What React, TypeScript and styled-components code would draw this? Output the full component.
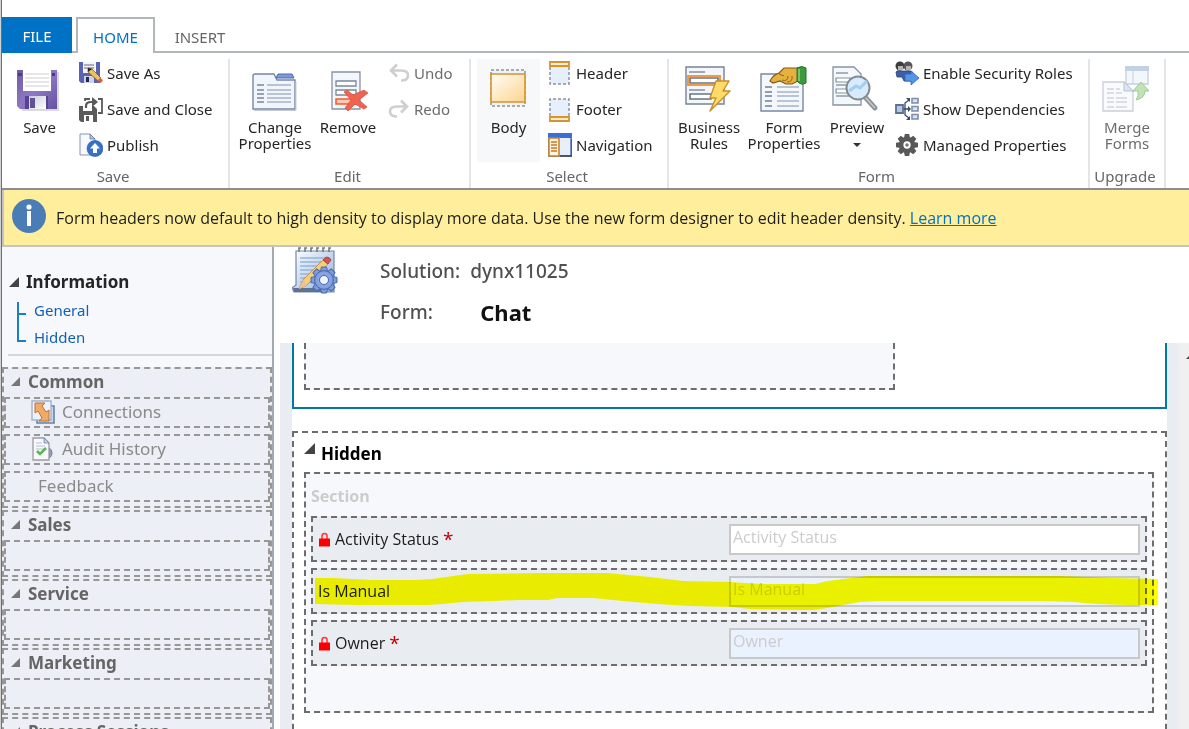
import React from "react";
import styled, { createGlobalStyle, css } from "styled-components";

const GlobalStyle = createGlobalStyle`
  * { box-sizing: border-box; }
  html, body, #root { height: 100%; }
  body {
    margin: 0;
    background: #fff;
    color: #262626;
    font-family: "Noto Sans", "Open Sans", sans-serif;
    font-size: 15px;
    line-height: 20px;
    overflow: hidden;
  }
  button, input { font: inherit; color: inherit; }
  button { background: none; border: 0; padding: 0; cursor: pointer; }
  a { color: #1160b7; text-decoration: none; }
  h1, h2, h3, p, ul { margin: 0; padding: 0; font: inherit; }
  ul { list-style: none; }
  svg { display: block; flex: none; }
`;

/* ---------- page frame ---------- */

const Page = styled.div`
  height: 100vh;
  display: flex;
  flex-direction: column;
  border-left: 1px solid #d2d2d2;
  overflow: hidden;
`;

const Frame = styled.div`
  flex: 1;
  min-height: 0;
  display: flex;
  flex-direction: column;
  border-left: 1px solid #6e6e6e;
`;

/* ---------- ribbon tabs ---------- */

const TabBar = styled.nav`
  display: flex;
  align-items: flex-end;
  height: 53px;
  flex: none;
  padding-top: 17px;
`;

const FileTab = styled.button`
  align-self: stretch;
  width: 70px;
  padding-top: 2px;
  background: #0072c6;
  color: #fff;
`;

const TabGap = styled.span<{ $fill?: boolean }>`
  width: 4px;
  border-bottom: 2px solid #b1b6ba;
  ${(p) => p.$fill && css`flex: 1;`}
`;

const Tab = styled.button<{ $active?: boolean }>`
  align-self: stretch;
  width: 79px;
  border: 2px solid ${(p) => (p.$active ? "#b1b6ba" : "transparent")};
  border-bottom-color: ${(p) => (p.$active ? "#fff" : "#b1b6ba")};
  border-bottom-width: ${(p) => (p.$active ? "0" : "2px")};
  padding-top: 2px;
  color: ${(p) => (p.$active ? "#0072c6" : "#666")};
  ${(p) => !p.$active && css`
    border-width: 0 0 2px;
    width: 90px;
    padding-top: 5px;
  `}
`;

/* ---------- ribbon ---------- */

const Ribbon = styled.div`
  display: flex;
  flex: none;
  height: 137px;
  padding-top: 6px;
  border-bottom: 2px solid #8a8d91;
`;

const Group = styled.section<{ $w: number }>`
  display: flex;
  flex-direction: column;
  width: ${(p) => p.$w}px;
  border-right: 2px solid #e4e5e6;
`;

const GroupBody = styled.div<{ $pad?: number; $gap?: number }>`
  display: flex;
  align-items: stretch;
  height: 103px;
  padding-left: ${(p) => p.$pad ?? 0}px;
  gap: ${(p) => p.$gap ?? 0}px;
`;

const GroupLabel = styled.h2`
  color: #666;
  text-align: center;
  padding-top: 4px;
  padding-right: 4px;
  white-space: nowrap;
`;

const BigButton = styled.button<{ $w: number; $on?: boolean; $off?: boolean }>`
  display: flex;
  flex-direction: column;
  align-items: center;
  flex: none;
  width: ${(p) => p.$w}px;
  padding-top: 7px;
  gap: 5px;
  line-height: 16px;
  background: ${(p) => (p.$on ? "#f7f8fa" : "transparent")};
  color: ${(p) => (p.$off ? "#6c6c6c" : "#262626")};
`;

const IconSlot = styled.span`
  display: flex;
  align-items: center;
  height: 48px;
  padding: 0 2px 2px 0;
`;

const Caption = styled.span`
  display: flex;
  flex-direction: column;
  align-items: center;
  white-space: nowrap;
`;

const SmallList = styled.div<{ $inset?: number }>`
  display: flex;
  flex-direction: column;
  gap: 12px;
  padding-top: 2px;
  margin-left: ${(p) => p.$inset ?? 0}px;
`;

const SmallButton = styled.button<{ $off?: boolean }>`
  display: flex;
  align-items: center;
  gap: 4px;
  height: 24px;
  white-space: nowrap;
  color: ${(p) => (p.$off ? "#6c6c6c" : "#262626")};
`;

/* ---------- notice ---------- */

const Notice = styled.div`
  display: flex;
  align-items: center;
  flex: none;
  gap: 10px;
  height: 57px;
  padding-left: 8px;
  color: #1d1d1d;
  background: #ffef9d;
  border-left: 2px solid #c4c4c4;
  border-bottom: 2px solid #c4c4c4;
  font-family: "Open Sans", "Noto Sans", sans-serif;
  font-size: 16px;
  white-space: nowrap;
  svg { margin-bottom: 4px; }
  p { padding-top: 1px; }
  a { color: #0072c6; text-decoration: underline; }
`;

/* ---------- sidebar ---------- */

const Work = styled.div`
  display: flex;
  flex: 1;
  min-height: 0;
`;

const Sidebar = styled.aside`
  flex: none;
  width: 272px;
  background: #f6f8fb;
  border-right: 2px solid #a3a9b3;
  overflow: hidden;
`;

const Outline = styled.div`
  margin-left: 6px;
  height: 109px;
  padding-top: 24px;
  border-bottom: 2px solid #d4d7da;
`;

const OutlineTitle = styled.h3`
  display: flex;
  align-items: center;
  gap: 7px;
  padding-left: 1px;
  font-size: 17px;
  line-height: 22px;
  font-weight: 700;
`;

const Tree = styled.ul`
  padding: 9px 0 0 9px;
`;

const Branch = styled.li`
  display: flex;
  height: 27px;
  gap: 8px;
  a { line-height: 16px; }
`;

const Modules = styled.div`
  display: flex;
  flex-direction: column;
  gap: 2px;
  margin-top: 11px;
  background: #eceff5;
`;

const Module = styled.section`
  border: 2px dashed #979797;
  padding-bottom: 4px;
  color: #8a8a8a;
`;

const ModuleTitle = styled.h3`
  display: flex;
  align-items: center;
  gap: 8px;
  height: 28px;
  padding: 0 0 3px 7px;
  color: #656565;
  font-size: 17px;
  font-weight: 700;
`;

const ModuleItems = styled.ul`
  display: flex;
  flex-direction: column;
  gap: 6px;
`;

const ModuleItem = styled.li<{ $indent?: number }>`
  display: flex;
  align-items: center;
  gap: 7px;
  height: 31px;
  border: 2px dashed #979797;
  padding: 0 0 2px ${(p) => p.$indent ?? 25}px;
  font-size: 17px;
`;

/* ---------- form designer ---------- */

const Designer = styled.main`
  flex: 1;
  min-width: 0;
  display: flex;
  flex-direction: column;
`;

const FormHeader = styled.header`
  display: flex;
  flex: none;
  gap: 40px;
  height: 96px;
  padding-left: 18px;
`;

const HeaderLines = styled.dl`
  margin: 0;
  padding-top: 10px;
  display: grid;
  grid-template-columns: auto auto;
  grid-template-rows: 28px 53px;
  align-items: center;
  align-content: start;
  justify-content: start;
  column-gap: 10px;
  color: #505050;
  font-size: 19px;
  font-weight: 500;
  white-space: nowrap;
  dt, dd { margin: 0; }
`;

const FormName = styled.dd`
  padding-left: 10px;
  color: #111;
  font-size: 22px;
  font-weight: 700;
`;

const CanvasArea = styled.div`
  display: flex;
  flex: 1;
  min-height: 0;
  margin-left: 6px;
  overflow: hidden;
  background: #e9ecf1;
`;

const Sheet = styled.div`
  flex: 1;
  margin: 0 12px;
  background: #fff;
`;

const ScrollTrack = styled.div`
  width: 10px;
  display: flex;
  justify-content: flex-end;
  padding-top: 13px;
  background: #f0f0f0;
`;

const SelectedTab = styled.section`
  display: grid;
  grid-template-columns: 16fr 7fr;
  height: 66px;
  padding: 0 11px 17px 10px;
  border: 2px solid #0278a3;
  border-top: 0;
`;

const EmptySection = styled.div`
  border: 2px dashed #6d6d6d;
  border-top: 0;
  background: #f6f8fb;
`;

const FormTab = styled.section`
  margin-top: 22px;
  height: 420px;
  padding: 0 11px 0 10px;
  border: 2px dashed #6d6d6d;
`;

const TabTitle = styled.h2`
  display: flex;
  gap: 6px;
  height: 39px;
  padding-top: 10px;
  color: #000;
  font-size: 17px;
  line-height: 22px;
  font-weight: 700;
`;

const Section = styled.div`
  height: 241px;
  padding: 12px 5px 0;
  border: 2px dashed #6d6d6d;
  background: #f6f8fb;
  font-family: "Open Sans", "Noto Sans", sans-serif;
  font-size: 16px;
`;

const SectionTitle = styled.h3`
  height: 30px;
  color: #ccc;
  font-weight: 700;
`;

const Fields = styled.div`
  display: flex;
  flex-direction: column;
  gap: 6px;
`;

const FieldRow = styled.div`
  position: relative;
  display: grid;
  grid-template-columns: 1fr 1fr;
  align-items: center;
  height: 46px;
  padding: 0 5px;
  border: 2px dashed #6d6d6d;
  background: #e9ecf1;
`;

const FieldLabel = styled.label`
  display: flex;
  align-items: center;
  gap: 4px;
  color: #1c1c1c;
`;

const Star = styled.span`
  color: #c00000;
  font-size: 19px;
`;

const FieldInput = styled.input<{ $tint?: boolean }>`
  width: 100%;
  height: 31px;
  padding: 0 2px 5px;
  border: 2px solid #c8c8c8;
  border-radius: 0;
  background: ${(p) => (p.$tint ? "#eaf1ff" : "#fff")};
  &::placeholder { color: #ccc; opacity: 1; }
`;

const Marker = styled.svg`
  position: absolute;
  left: 2px;
  top: 3px;
  width: calc(100% + 11px);
  height: 38px;
  mix-blend-mode: multiply;
  pointer-events: none;
`;

/* ---------- icons ---------- */

const Triangle = ({ fill = "#444", size = 11 }) => (
  <svg width={size} height={size} viewBox="0 0 11 11" aria-hidden>
    <path d="M11 0V11H0Z" fill={fill} />
  </svg>
);

const SaveIcon = () => (
  <svg width="43" height="43" viewBox="0 0 43 43" aria-hidden>
    <defs>
      <linearGradient id="disk" x1="0" y1="0" x2="1" y2="1">
        <stop offset="0" stopColor="#6f5aa6" />
        <stop offset="0.5" stopColor="#8e78c4" />
        <stop offset="1" stopColor="#6551a0" />
      </linearGradient>
      <linearGradient id="steel" x1="0" y1="0" x2="1" y2="1">
        <stop offset="0" stopColor="#c9c9d6" />
        <stop offset="1" stopColor="#fff" />
      </linearGradient>
    </defs>
    <path d="M3 4H42V43H6L3 40Z" fill="#d9d9de" />
    <path d="M0 2H40V41H3L0 38Z" fill="url(#disk)" />
    <path d="M6 2H34V23H6Z" fill="#fff" />
    <path d="M8 6H32M8 10H32M8 14H32M8 18H32" stroke="#cdcdd2" strokeWidth="1.200" />
    <path d="M1 5H5V8H1ZM35 5H38V8H35Z" fill="#4b3b86" />
    <path d="M8 28H31V41H8Z" fill="#56458e" />
    <path d="M12 28H29V41H12Z" fill="url(#steel)" />
    <path d="M13 30H18V40H13Z" fill="#62529c" />
  </svg>
);

const SaveAsIcon = () => (
  <svg width="24" height="24" viewBox="0 0 24 24" aria-hidden>
    <path d="M0 1H21V22H2L0 20Z" fill="#5a62b4" />
    <path d="M4 1H17V12H4Z" fill="#f4f4fb" />
    <path d="M5 4H15M5 7H15" stroke="#9295b0" strokeWidth="1.5" />
    <path d="M5 15H15V22H5Z" fill="#cfd2e4" />
    <path d="M7 16H10V21H7Z" fill="#222a55" />
    <path d="M9 7L13 8L22 17L19 20L9 11Z" fill="#edc25a" stroke="#7d5d1d" strokeWidth="0.8" />
    <path d="M18 20L21 17L24 19L22 22Z" fill="#d5604a" />
    <path d="M9 7L13 8L9 11Z" fill="#222" />
  </svg>
);

const SaveCloseIcon = () => (
  <svg width="24" height="25" viewBox="0 0 24 25" aria-hidden>
    <path d="M0 9H4V14H13V9H15L18 12V25H2L0 23Z" fill="#5a5a5a" />
    <path d="M5 18H14V25H5Z" fill="#fff" />
    <path d="M7 19H10V24H7Z" fill="#5a5a5a" />
    <path d="M7 11V9Q7 5 12 5H15" fill="none" stroke="#5a5a5a" strokeWidth="2.2" />
    <path d="M13 0L19 5L13 10V7Z" fill="#5a5a5a" />
    <path d="M6 4V2H11M19 2H23V16H19" fill="none" stroke="#5a5a5a" strokeWidth="1.8" />
  </svg>
);

const PublishIcon = () => (
  <svg width="24" height="24" viewBox="0 0 24 24" aria-hidden>
    <path d="M1 1H11L16 6V22H1Z" fill="#f7f9fc" stroke="#8496b0" />
    <path d="M11 1V6H16Z" fill="#b8c6dc" stroke="#60799c" strokeWidth="0.8" />
    <circle cx="16" cy="15.500" r="8" fill="#3572c6" stroke="#2353a0" strokeWidth="0.6" />
    <path d="M16 10L21 15.500H18V20H14V15.500H11Z" fill="#fff" />
  </svg>
);

const PropertiesIcon = () => (
  <svg width="45" height="43" viewBox="0 0 45 43" aria-hidden>
    <path d="M1 8Q1 6 3 6H22L25 12H43V41H1Z" fill="#f1f6fc" stroke="#7787a3" strokeWidth="1.4" />
    <path d="M24 10L26 6H40L42 10Z" fill="#7d9ad6" stroke="#4c6bb0" />
    <path d="M5 17H12M5 22H12M5 26H12M5 30H12M5 34H12" stroke="#7d8797" strokeWidth="1.5" />
    <path d="M15 17H39M15 22H39M15 26H39M15 30H39M15 34H39" stroke="#a6b2c4" strokeWidth="1.5" />
    <path d="M2 42.500H44V14" fill="none" stroke="#c4c9d1" />
  </svg>
);

const RemoveIcon = () => (
  <svg width="42" height="43" viewBox="0 0 42 43" aria-hidden>
    <path d="M6 4H34V41H6Z" fill="#f3f7fb" stroke="#8793a5" strokeWidth="1.3" />
    <path d="M10 13H30V18H10ZM10 22H30V27H10Z" fill="#fff" stroke="#7c8796" strokeWidth="1.3" />
    <path d="M10 31H30V36H10Z" fill="#ffc7ae" stroke="#ee5e33" strokeWidth="1.6" />
    <path d="M21 22L27 27L38 22L42 25L33 32L41 39L38 41L29 36L22 43L19 40L25 32L18 24Z" fill="#ee6450" stroke="#dd4b36" strokeWidth="0.7" />
  </svg>
);

const UndoIcon = ({ flip = false }) => (
  <svg width="22" height="20" viewBox="0 0 22 20" aria-hidden>
    <g transform={flip ? "matrix(-1 0 0 1 22 0)" : undefined}>
      <path d="M3 7.500H13Q20 7.500 20 12.500T13 17.500" fill="none" stroke="#cfcfcf" strokeWidth="2.600" />
      <path d="M9 1.500L3 7.500L9 13.500" fill="none" stroke="#cfcfcf" strokeWidth="2.600" />
    </g>
  </svg>
);

const BodyIcon = () => (
  <svg width="38" height="43" viewBox="0 0 38 43" aria-hidden>
    <defs>
      <linearGradient id="amber" x1="0" y1="0" x2="1" y2="1">
        <stop offset="0" stopColor="#fffdf7" />
        <stop offset="1" stopColor="#fcd48e" />
      </linearGradient>
    </defs>
    <path d="M2 2H36V38H2Z" fill="#eef3fa" stroke="#8d939c" strokeWidth="1.500" strokeDasharray="3 2" />
    <path d="M2 6H36V34H2Z" fill="url(#amber)" stroke="#d9922c" strokeWidth="1.600" />
  </svg>
);

const BandIcon = ({ footer = false }) => (
  <svg width="24" height="25" viewBox="0 0 24 25" aria-hidden>
    <g transform={footer ? "matrix(1 0 0 -1 0 25)" : undefined}>
      <path d="M2 6V23H21V6" fill="#e6effb" stroke="#8d939c" strokeWidth="1.500" strokeDasharray="3 2" />
      <path d="M2 1H21V5H2Z" fill="#fff0cf" stroke="#d9922c" strokeWidth="1.800" />
    </g>
  </svg>
);

const NavigationIcon = () => (
  <svg width="24" height="24" viewBox="0 0 24 24" aria-hidden>
    <path d="M1 1H23V23H1Z" fill="#e7effa" stroke="#4a68a8" strokeWidth="1.400" />
    <path d="M0 0H24V5H0Z" fill="#3a6fd8" />
    <path d="M1 5H11V23H1Z" fill="#fff4dc" stroke="#c98026" strokeWidth="1.500" />
    <path d="M3 9H9M3 12H9M3 15H9M3 18H9" stroke="#c77a27" strokeWidth="1.400" />
    <path d="M12 23H24V6" fill="none" stroke="#3c4657" strokeWidth="1.400" />
  </svg>
);

const RulesIcon = () => (
  <svg width="46" height="46" viewBox="0 0 46 46" aria-hidden>
    <path d="M1 1H39V38H1Z" fill="#f3f7fb" stroke="#758296" strokeWidth="1.400" />
    <path d="M4 6H20M4 24H20" stroke="#8590a1" strokeWidth="1.600" />
    <path d="M3 10H35V19H3Z" fill="#fff" stroke="#ef9a45" strokeWidth="2" />
    <path d="M5 12H33V17H5ZM5 28H26V33H5Z" fill="#fff" stroke="#66748a" strokeWidth="1.600" />
    <path d="M31 15H44L38 25H45L25 45L31 32H25Z" fill="#ffdc69" stroke="#c98f26" strokeWidth="1.400" strokeLinejoin="round" />
  </svg>
);

const FormPropsIcon = () => (
  <svg width="47" height="46" viewBox="0 0 47 46" aria-hidden>
    <path d="M1 8H43V45H1Z" fill="#f4f8fc" stroke="#7787a3" strokeWidth="1.400" />
    <path d="M5 21H12M5 26H12M5 30H12M5 35H12M5 40H12" stroke="#6f7f9b" strokeWidth="1.600" />
    <path d="M17 21H39M17 26H39M17 30H39M17 35H39M17 40H39" stroke="#a6b2c4" strokeWidth="1.600" />
    <path d="M10 15Q13 9 19 7L24 2H38V15L32 18H26L20 15L13 17Z" fill="#e8b13e" stroke="#7d5a17" strokeWidth="1.200" />
    <path d="M19 8L24 10M22 14Q28 16 28 10M27 16Q33 16 32 10" fill="none" stroke="#8a651d" />
    <path d="M37 2Q42 -1 46 2V17Q41 20 37 15Z" fill="#3d9a3c" stroke="#22702a" />
    <path d="M39 3V15" stroke="#8fd27e" strokeWidth="1.500" />
  </svg>
);

const PreviewIcon = () => (
  <svg width="48" height="46" viewBox="0 0 48 46" aria-hidden>
    <path d="M1 1H22L29 8V39H1Z" fill="#f5f8fb" stroke="#8592a5" strokeWidth="1.300" />
    <path d="M4 7H16M4 19H16M4 30H18" stroke="#8f9aab" strokeWidth="1.500" />
    <path d="M4 12H18V16H4ZM4 23H18V27H4Z" fill="#fff" stroke="#8491a4" strokeWidth="1.200" />
    <path d="M33 31L43 42" stroke="#8d939b" strokeWidth="5" strokeLinecap="round" />
    <path d="M33 31L43 42" stroke="#c6cacf" strokeWidth="1.500" />
    <circle cx="26" cy="22" r="11.500" fill="#d6ebfb" stroke="#848b94" strokeWidth="2" />
    <path d="M17 25L24 20L28 22L35 15" fill="none" stroke="#a4cdf2" strokeWidth="3" />
  </svg>
);

const RolesIcon = () => (
  <svg width="24" height="24" viewBox="0 0 24 24" aria-hidden>
    <circle cx="5" cy="5" r="4.500" fill="#3c3c3e" />
    <circle cx="13" cy="5" r="4.500" fill="#555659" />
    <path d="M3 5H8V9H3ZM11 5H16V9H11Z" fill="#b9b4ae" />
    <path d="M1 11Q2 9 6 10L11 10L16 10Q19 11 19 16V20H9L7 16H2Z" fill="#3d5fa6" stroke="#263f78" strokeWidth="0.800" />
    <path d="M10 13H16V10L24 17L16 24V20H10Z" fill="#5594e8" stroke="#2b64bd" strokeWidth="0.800" />
  </svg>
);

const DependenciesIcon = () => (
  <svg width="24" height="24" viewBox="0 0 24 24" aria-hidden>
    <path d="M7 12H15M10 12V6L14 3M10 12V18L14 21" fill="none" stroke="#35496a" strokeWidth="1.300" />
    <path d="M13 9L16 12L13 15ZM11 1H15V5ZM11 23H15V19Z" fill="#35496a" />
    <path d="M1 8H8V16H1Z" fill="#b7c7e0" stroke="#5d7192" strokeWidth="1.800" />
    <path d="M17 1.500H23V6H17ZM17 9.500H23V14H17ZM17 17.500H23V22H17Z" fill="#dbe4f1" stroke="#7d8dab" strokeWidth="1.600" />
  </svg>
);

const Gear = ({ r = 11, fill = "#585858", stroke = "none", hole = "#fff" }) => (
  <g fill={fill} stroke={stroke}>
    {[0, 45, 90, 135, 180, 225, 270, 315].map((a) => (
      <path key={a} transform={`rotate(${a})`} d={`M${-r * 0.2} ${-r}H${r * 0.2}L${r * 0.28} ${-r * 0.6}H${-r * 0.28}Z`} />
    ))}
    <circle r={r * 0.72} />
    <circle r={r * 0.33} fill={hole} />
  </g>
);

const GearIcon = () => (
  <svg width="24" height="24" viewBox="-12 -12 24 24" aria-hidden>
    <Gear />
    <circle r="1.800" fill="#777" />
  </svg>
);

const MergeIcon = () => (
  <svg width="48" height="46" viewBox="0 0 48 46" aria-hidden>
    <path d="M24 1H46V18H24Z" fill="#f3f7fc" stroke="#c5cfdf" strokeWidth="1.300" />
    <path d="M23 0H47V5H23Z" fill="#c2d0e8" />
    <path d="M31 5V18" stroke="#c5cfdf" />
    <path d="M1 16H22L31 25V45H1Z" fill="#f8fafc" stroke="#c9cfd8" strokeWidth="1.300" />
    <path d="M22 16V25H31Z" fill="#dde4ee" stroke="#b9c3d3" />
    <path d="M5 23H12M5 27H12M5 32H12M5 36H12M5 41H12M14 23H18M14 27H20M14 32H25M14 36H25M14 41H25" stroke="#d0d5de" strokeWidth="1.400" />
    <path d="M39 16L47 25H43Q43 32 34 34Q37 30 36 25H31Z" fill="#bfe3b4" stroke="#9dcc92" />
  </svg>
);

const InfoIcon = () => (
  <svg width="34" height="34" viewBox="0 0 34 34" aria-hidden>
    <circle cx="17" cy="17" r="17" fill="#4a7db5" />
    <circle cx="17" cy="8" r="2.600" fill="#fff" />
    <path d="M15 12H19V27H15Z" fill="#fff" />
  </svg>
);

const FormIcon = () => (
  <svg width="48" height="48" viewBox="0 0 48 48" aria-hidden>
    <defs>
      <linearGradient id="pad" x1="0" y1="0" x2="1" y2="1">
        <stop offset="0" stopColor="#fff" />
        <stop offset="1" stopColor="#8fb0da" />
      </linearGradient>
    </defs>
    <path d="M4 4H42V45H2L0 41L4 38Z" fill="url(#pad)" stroke="#7189ab" strokeWidth="1.200" />
    <path d="M1 41H32V45H2Z" fill="#5b7396" />
    <path d="M8 11H37M8 15H37M8 19H34M8 23H30M8 27H27M8 31H24M8 35H22" stroke="#94b4dd" strokeWidth="1.500" />
    <path d="M7 5V1H9M13 5V1H15M19 5V1H21M25 5V1H27M31 5V1H33M37 5V1H39" fill="none" stroke="#777" strokeWidth="1.600" />
    <path d="M7 42L11 33L31 13L36 17L15 38Z" fill="#f6cf74" stroke="#b98a3c" strokeWidth="0.800" />
    <path d="M7 42L11 33L15 38Z" fill="#e9c29a" />
    <path d="M31 13L34 10Q38 10 39 13L36 17Z" fill="#d65454" stroke="#9c3a3a" strokeWidth="0.800" />
    <g transform="translate(32 33)">
      <Gear r={13} fill="#7d9cdb" stroke="#4a68ae" hole="#e8effb" />
      <circle r="8" fill="#86a4e0" />
      <circle r="4.500" fill="#eef3fc" stroke="#4a68ae" />
    </g>
  </svg>
);

const ConnectionsIcon = () => (
  <svg width="24" height="24" viewBox="0 0 24 24" aria-hidden>
    <path d="M6 6H23V23H6Z" fill="#cdd9ec" stroke="#6a82a8" strokeWidth="1.600" />
    <path d="M1 1H20V20H1Z" fill="#eef3fa" stroke="#a3b3cc" strokeWidth="1.400" />
    <path d="M4 3H14L11 6L15 12L18 10V21H8L11 18L7 11L4 13Z" fill="#f2ab66" stroke="#b8733c" strokeLinejoin="round" />
  </svg>
);

const AuditIcon = () => (
  <svg width="24" height="24" viewBox="0 0 24 24" aria-hidden>
    <circle cx="15" cy="16" r="6" fill="#8ca0bf" stroke="#6c7c96" />
    <path d="M2 1H13L18 6V23H2Z" fill="#f7f9fc" stroke="#a09aa0" strokeWidth="1.300" />
    <path d="M13 1V6H18Z" fill="#c8d3e4" stroke="#6f84a5" strokeWidth="0.800" />
    <path d="M5 6H11M5 9H14M5 12H14" stroke="#b5c2d6" />
    <path d="M6 14L9 17L15 11" fill="none" stroke="#5cb556" strokeWidth="2.600" />
  </svg>
);

const LockIcon = () => (
  <svg width="13" height="15" viewBox="0 0 13 15" aria-hidden>
    <path d="M4 7V4Q4 1.500 6.500 1.500T9 4V7" fill="none" stroke="#f33" strokeWidth="1.500" />
    <path d="M1 6.500H12V14.500H1Z" fill="#fa0000" />
  </svg>
);

const TreeArm = ({ last = false }) => (
  <svg width="9" height="27" viewBox="0 0 9 27" aria-hidden>
    <path d={last ? "M1 0V12H9" : "M1 0V27M1 12H9"} fill="none" stroke="#1a7fc2" strokeWidth="2" />
  </svg>
);

/* ---------- page ---------- */

const modules = ["Sales", "Service", "Marketing", "Process Sessions"];

type FieldProps = { id: string; name: string; locked?: boolean; tint?: boolean; marked?: boolean };

const Field = ({ id, name, locked, tint, marked }: FieldProps) => (
  <FieldRow>
    <FieldLabel htmlFor={id}>
      {locked && <LockIcon />}
      {name}
      {locked && <Star>*</Star>}
    </FieldLabel>
    <FieldInput id={id} placeholder={name} $tint={tint} />
    {marked && (
      <Marker viewBox="0 0 843 38" preserveAspectRatio="none" aria-hidden>
        <path
          fill="#ff0"
          d="M0 5H18L57 7H100L117 6L138 3L153 1L228 0H292L335 4L368 8L415 9L430 10L448 11H500L513 8L528 6L552 3H743L773 4L795 5L843 6V32H812L782 31L758 29L725 28H567L545 29L528 32L512 35L498 37H485L435 36L418 34L375 33L342 31L308 28L278 25H242L233 27H205L178 28L148 29L127 31L113 32H40L0 31Z"
        />
      </Marker>
    )}
  </FieldRow>
);

export default function App() {
  return (
    <Page>
      <GlobalStyle />
      <Frame>
        <TabBar>
          <FileTab>FILE</FileTab>
          <TabGap />
          <Tab $active>HOME</Tab>
          <Tab>INSERT</Tab>
          <TabGap $fill />
        </TabBar>

        <Ribbon>
          <Group $w={228}>
            <GroupBody $gap={2}>
              <BigButton $w={75}>
                <IconSlot><SaveIcon /></IconSlot>
                <Caption>Save</Caption>
              </BigButton>
              <SmallList>
                <SmallButton><SaveAsIcon />Save As</SmallButton>
                <SmallButton><SaveCloseIcon />Save and Close</SmallButton>
                <SmallButton><PublishIcon />Publish</SmallButton>
              </SmallList>
            </GroupBody>
            <GroupLabel>Save</GroupLabel>
          </Group>

          <Group $w={241}>
            <GroupBody $pad={6} $gap={4}>
              <BigButton $w={78}>
                <IconSlot><PropertiesIcon /></IconSlot>
                <Caption><span>Change</span><span>Properties</span></Caption>
              </BigButton>
              <BigButton $w={60}>
                <IconSlot><RemoveIcon /></IconSlot>
                <Caption>Remove</Caption>
              </BigButton>
              <SmallList $inset={6}>
                <SmallButton $off><UndoIcon />Undo</SmallButton>
                <SmallButton $off><UndoIcon flip />Redo</SmallButton>
              </SmallList>
            </GroupBody>
            <GroupLabel>Edit</GroupLabel>
          </Group>

          <Group $w={198}>
            <GroupBody $pad={6} $gap={8}>
              <BigButton $w={63} $on>
                <IconSlot><BodyIcon /></IconSlot>
                <Caption>Body</Caption>
              </BigButton>
              <SmallList>
                <SmallButton><BandIcon />Header</SmallButton>
                <SmallButton><BandIcon footer />Footer</SmallButton>
                <SmallButton><NavigationIcon />Navigation</SmallButton>
              </SmallList>
            </GroupBody>
            <GroupLabel>Select</GroupLabel>
          </Group>

          <Group $w={421}>
            <GroupBody $pad={8}>
              <BigButton $w={64}>
                <IconSlot><RulesIcon /></IconSlot>
                <Caption><span>Business</span><span>Rules</span></Caption>
              </BigButton>
              <BigButton $w={86}>
                <IconSlot><FormPropsIcon /></IconSlot>
                <Caption><span>Form</span><span>Properties</span></Caption>
              </BigButton>
              <BigButton $w={60}>
                <IconSlot><PreviewIcon /></IconSlot>
                <Caption>
                  Preview
                  <svg width="8" height="14" viewBox="0 0 8 14" aria-hidden>
                    <path d="M0 8H8L4 12Z" fill="#333" />
                  </svg>
                </Caption>
              </BigButton>
              <SmallList $inset={8}>
                <SmallButton><RolesIcon />Enable Security Roles</SmallButton>
                <SmallButton><DependenciesIcon />Show Dependencies</SmallButton>
                <SmallButton><GearIcon />Managed Properties</SmallButton>
              </SmallList>
            </GroupBody>
            <GroupLabel>Form</GroupLabel>
          </Group>

          <Group $w={76}>
            <GroupBody>
              <BigButton $w={74} $off>
                <IconSlot><MergeIcon /></IconSlot>
                <Caption><span>Merge</span><span>Forms</span></Caption>
              </BigButton>
            </GroupBody>
            <GroupLabel>Upgrade</GroupLabel>
          </Group>
        </Ribbon>

        <Notice>
          <InfoIcon />
          <p>
            Form headers now default to high density to display more data. Use the new form designer to edit
            header density. <a href="#learn-more">Learn more</a>
          </p>
        </Notice>

        <Work>
          <Sidebar>
            <Outline>
              <OutlineTitle><Triangle size={10} />Information</OutlineTitle>
              <Tree>
                <Branch><TreeArm /><a href="#general">General</a></Branch>
                <Branch><TreeArm last /><a href="#hidden">Hidden</a></Branch>
              </Tree>
            </Outline>
            <Modules>
              <Module>
                <ModuleTitle><Triangle fill="#777" size={9} />Common</ModuleTitle>
                <ModuleItems>
                  <ModuleItem><ConnectionsIcon />Connections</ModuleItem>
                  <ModuleItem><AuditIcon />Audit History</ModuleItem>
                  <ModuleItem $indent={32}>Feedback</ModuleItem>
                </ModuleItems>
              </Module>
              {modules.map((name) => (
                <Module key={name}>
                  <ModuleTitle><Triangle fill="#777" size={9} />{name}</ModuleTitle>
                  <ModuleItems><ModuleItem /></ModuleItems>
                </Module>
              ))}
            </Modules>
          </Sidebar>

          <Designer>
            <FormHeader>
              <FormIcon />
              <HeaderLines>
                <dt>Solution:</dt>
                <dd>dynx11025</dd>
                <dt>Form:</dt>
                <FormName>Chat</FormName>
              </HeaderLines>
            </FormHeader>
            <CanvasArea>
              <Sheet>
                <SelectedTab><EmptySection /></SelectedTab>
                <FormTab id="hidden">
                  <TabTitle><Triangle />Hidden</TabTitle>
                  <Section>
                    <SectionTitle>Section</SectionTitle>
                    <Fields>
                      <Field id="activity-status" name="Activity Status" locked />
                      <Field id="is-manual" name="Is Manual" tint marked />
                      <Field id="owner" name="Owner" locked tint />
                    </Fields>
                  </Section>
                </FormTab>
              </Sheet>
              <ScrollTrack>
                <svg width="3" height="4" viewBox="0 0 3 4" aria-hidden>
                  <path d="M3 0V3H0Z" fill="#444" />
                </svg>
              </ScrollTrack>
            </CanvasArea>
          </Designer>
        </Work>
      </Frame>
    </Page>
  );
}
